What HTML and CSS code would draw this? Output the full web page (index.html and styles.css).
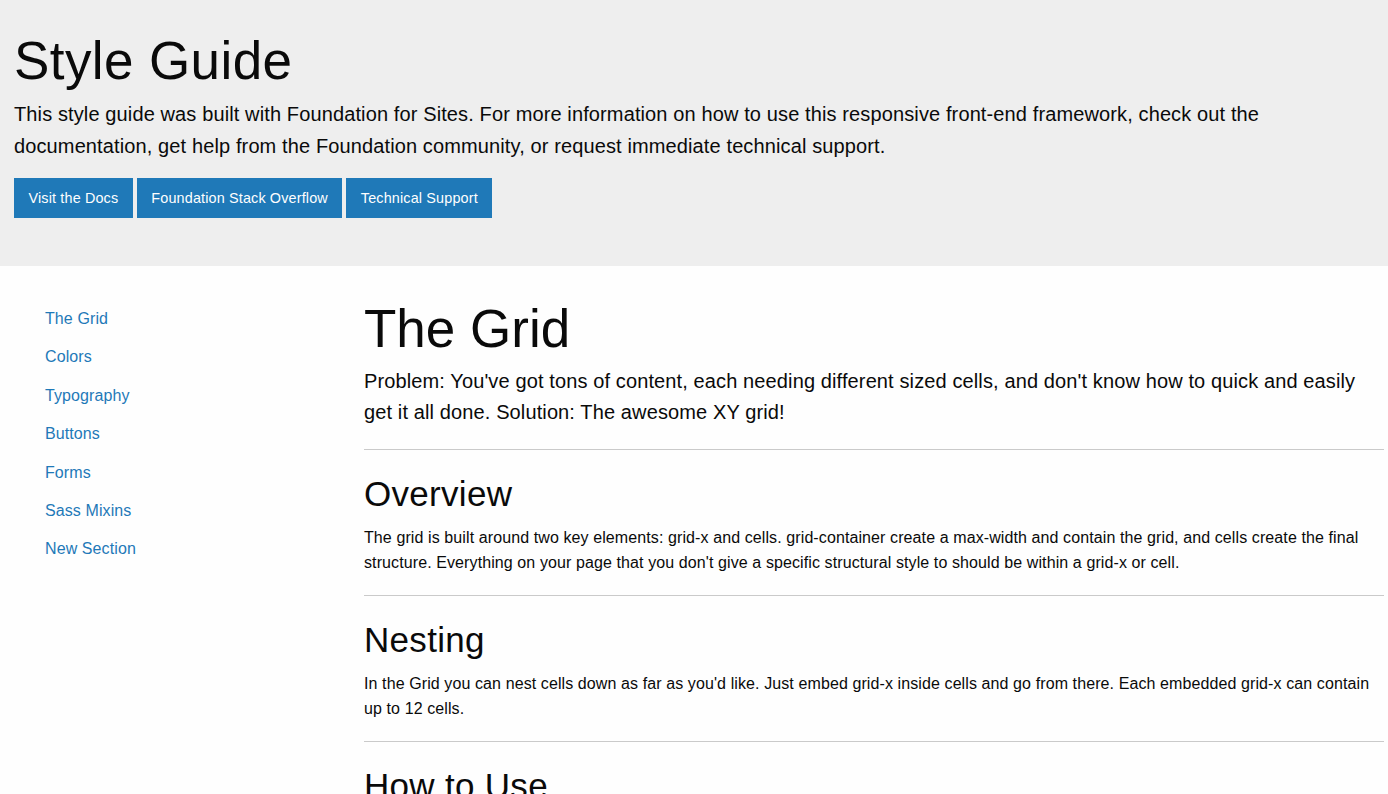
FILE: index.html
```html
<!DOCTYPE html>
<html lang="en">
<head>
<meta charset="utf-8">
<title>Style Guide</title>
<link rel="stylesheet" href="styles.css">
</head>
<body>
<header class="hero">
  <h1 class="hero-title">Style Guide</h1>
  <p class="lead">This style guide was built with Foundation for Sites. For more information on how to use this responsive front-end framework, check out the documentation, get help from the Foundation community, or request immediate technical support.</p>
  <div class="btn-row">
    <a class="button" href="#">Visit the Docs</a>
    <a class="button" href="#">Foundation Stack Overflow</a>
    <a class="button" href="#">Technical Support</a>
  </div>
</header>
<div class="page">
  <nav class="side">
    <ul class="menu">
      <li><a href="#">The Grid</a></li>
      <li><a href="#">Colors</a></li>
      <li><a href="#">Typography</a></li>
      <li><a href="#">Buttons</a></li>
      <li><a href="#">Forms</a></li>
      <li><a href="#">Sass Mixins</a></li>
      <li><a href="#">New Section</a></li>
    </ul>
  </nav>
  <main class="content">
    <h1 class="page-title">The Grid</h1>
    <p class="lead">Problem: You've got tons of content, each needing different sized cells, and don't know how to quick and easily get it all done. Solution: The awesome XY grid!</p>
    <hr class="rule rule-first">
    <h2 class="sec-title">Overview</h2>
    <p class="body-text">The grid is built around two key elements: grid-x and cells. grid-container create a max-width and contain the grid, and cells create the final structure. Everything on your page that you don't give a specific structural style to should be within a grid-x or cell.</p>
    <hr class="rule">
    <h2 class="sec-title">Nesting</h2>
    <p class="body-text">In the Grid you can nest cells down as far as you'd like. Just embed grid-x inside cells and go from there. Each embedded grid-x can contain up to 12 cells.</p>
    <hr class="rule">
    <h2 class="sec-title">How to Use</h2>
    <p class="body-text">Just use a grid-x with cell and you're good to go.</p>
  </main>
</div>
</body>
</html>
```

FILE: styles.css
```css
html, body {
  margin: 0;
  padding: 0;
}
body {
  background: #fefefe;
  color: #0a0a0a;
  font-family: "Liberation Sans", Arial, Helvetica, sans-serif;
  font-size: 16px;
}
.hero {
  background: #eeeeee;
  padding: 24px 14px 48px 14px;
}
.hero-title, .page-title {
  font-size: 53px;
  font-weight: 400;
  line-height: 74px;
  margin: 0;
}
.hero-title {
  letter-spacing: 0.4px;
}
.lead {
  font-size: 20px;
  line-height: 32px;
  letter-spacing: 0.12px;
  margin: 0;
}
.page-title + .lead {
  line-height: 31px;
}
.btn-row {
  display: flex;
  gap: 4px;
  margin-top: 16px;
}
.button {
  display: block;
  background: #1f79b8;
  color: #fefefe;
  text-decoration: none;
  font-size: 14.4px;
  line-height: 16px;
  letter-spacing: 0.15px;
  padding: 12px 14.5px;
}
.page {
  display: flex;
  padding-top: 26px;
}
.side {
  width: 347px;
  flex: none;
  padding-left: 29px;
  padding-top: 8px;
  box-sizing: border-box;
}
.menu {
  list-style: none;
  margin: 0;
  padding: 0;
}
.menu a {
  display: block;
  padding: 11px 16px;
  line-height: 16.4px;
  font-size: 16px;
  letter-spacing: 0.1px;
  color: #1f79b8;
  text-decoration: none;
}
.content {
  flex: 1;
  min-width: 0;
  padding: 0 4px 0 17px;
}
.rule {
  border: 0;
  border-bottom: 1px solid #cacaca;
  margin: 20px 0 0 0;
  height: 0;
}
.rule-first {
  margin-top: 21px;
}
.sec-title {
  font-size: 35px;
  font-weight: 400;
  line-height: 49px;
  letter-spacing: 0.3px;
  margin: 19px 0 0 0;
}
.body-text {
  font-size: 16px;
  line-height: 25px;
  letter-spacing: 0.1px;
  margin: 7px 0 0 0;
}
```
